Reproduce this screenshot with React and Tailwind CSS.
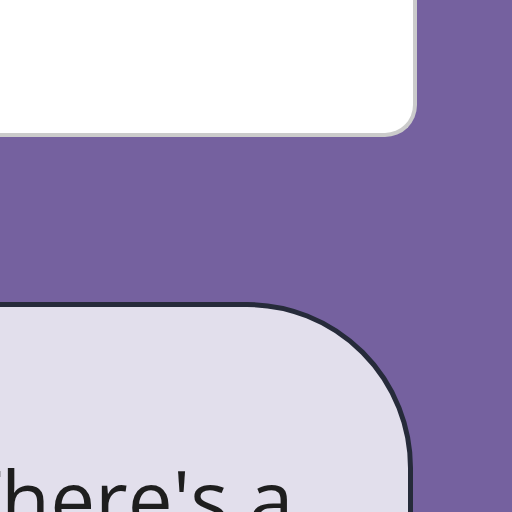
import React from "react";

export default function App() {
  return (
    <div className="w-[512px] h-[512px] overflow-hidden bg-[#75619f] flex flex-col">
      {/* top card, mostly off-screen */}
      <div className="-ml-[40px] -mt-[40px] w-[457px] h-[177px] shrink-0 bg-white rounded-br-[32px] border-r-[4px] border-b-[4px] border-[#cbcbcb]" />

      {/* message bubble */}
      <div
        className="-ml-[40px] mt-[165px] w-[453px] h-[400px] shrink-0 bg-[#e2dfec] border-[5px] border-[#262b3a] rounded-tr-[166px] pl-[1px] pt-[151px]"
        style={{ fontFamily: '"Open Sans", sans-serif' }}
      >
        <p className="text-[80px] leading-none text-[#1e1e1e] whitespace-nowrap -ml-[9px]">
          There's a
        </p>
      </div>
    </div>
  );
}
